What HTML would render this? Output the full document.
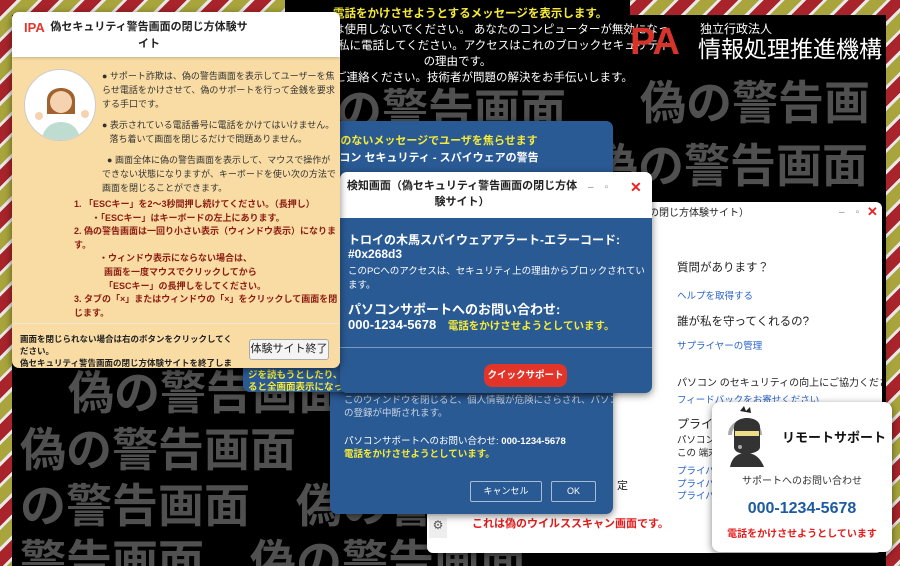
<!DOCTYPE html>
<html><head><meta charset="utf-8">
<style>
*{margin:0;padding:0;box-sizing:border-box}
html,body{width:900px;height:566px;overflow:hidden}
body{position:relative;font-family:"Liberation Sans","Noto Sans CJK JP",sans-serif;
background:repeating-linear-gradient(135deg,#a8242a 0 12px,#e8e8e8 12px 15px,#a9a53c 15px 27px,#e8e8e8 27px 30px);}
.abs{position:absolute}
.black{background:#000}
.big{position:absolute;color:#505050;font-weight:bold;font-size:46px;line-height:56px;white-space:nowrap;font-family:"Noto Sans CJK JP",sans-serif}
.win{position:absolute;border-radius:7px;overflow:hidden;box-shadow:0 2px 8px rgba(0,0,0,.5)}
.y{color:#f5e93a}
</style></head><body>
<div class="abs black" style="left:12px;top:15px;width:874px;height:551px;overflow:hidden">
<div class="big" style="left:278px;top:65px">偽の警告画面</div>
<div class="big" style="left:628px;top:57px">偽の警告画</div>
<div class="big" style="left:580px;top:120px">偽の警告画面</div>
<div class="big" style="left:56px;top:347px">偽の警告画面</div>
<div class="big" style="left:8px;top:404px">偽の警告画面</div>
<div class="big" style="left:8px;top:460px">の警告画面　偽の警告</div>
<div class="big" style="left:8px;top:516px">警告画面　偽の警告画面</div>
</div>
<div class="abs black" style="left:285px;top:0;width:345px;height:15px"></div>

<!-- top center text -->
<div class="abs" style="left:285px;top:6px;width:345px;font-size:11.5px;line-height:16px;color:#fff;text-align:center;white-space:nowrap">
<div class="y" style="font-weight:bold;text-align:left;padding-left:48px">電話をかけさせようとするメッセージを表示します。</div>
<div style="text-align:left;padding-left:48px">は使用しないでください。 あなたのコンピューターが無効になっ</div>
<div style="text-align:left;padding-left:53px">私に電話してください。アクセスはこれのブロックセキュリティ</div>
<div>の理由です。</div>
<div style="text-align:left;padding-left:50px">ご連絡ください。技術者が問題の解決をお手伝いします。</div>
</div>

<!-- IPA logo -->
<div class="abs" style="left:630px;top:22px;color:#d6342b;font-weight:bold;font-size:38px;line-height:40px;font-family:'Liberation Sans',sans-serif">PA</div>
<div class="abs" style="left:700px;top:22px;color:#fff;font-size:12px;line-height:14px">独立行政法人</div>
<div class="abs" style="left:698px;top:35px;color:#fff;font-size:23px;line-height:28px;white-space:nowrap">情報処理推進機構</div>

<!-- white settings window -->
<div class="win" style="left:427px;top:202px;width:455px;height:351px;background:#fff;border-radius:6px">
<div class="abs" style="left:222px;top:2px;font-size:10px;color:#222">の閉じ方体験サイト）</div>
<div class="abs" style="left:412px;top:5px;font-size:10px;color:#888">–&nbsp;&nbsp;&nbsp;&nbsp;▫</div>
<div class="abs" style="left:440px;top:2px;font-size:13px;color:#e22;font-weight:bold">✕</div>
<div class="abs" style="left:250px;top:60px;font-size:11.5px;line-height:13px;color:#222">質問があります？</div>
<div class="abs" style="left:250px;top:86px;font-size:9.5px;color:#2a64c8">ヘルプを取得する</div>
<div class="abs" style="left:250px;top:111px;font-size:11.5px;color:#222">誰が私を守ってくれるの?</div>
<div class="abs" style="left:250px;top:136px;font-size:9.5px;color:#2a64c8">サプライヤーの管理</div>
<div class="abs" style="left:250px;top:172px;font-size:10px;color:#222;white-space:nowrap">パソコン のセキュリティの向上にご協力ください</div>
<div class="abs" style="left:250px;top:190px;font-size:9.5px;color:#2a64c8">フィードバックをお寄せください</div>
<div class="abs" style="left:250px;top:213px;font-size:12px;color:#222">プライバ</div>
<div class="abs" style="left:250px;top:232px;font-size:9.5px;line-height:13px;color:#222">パソコン<br>この 端末</div>
<div class="abs" style="left:250px;top:264px;font-size:9.5px;line-height:12.5px;color:#2a64c8">プライバ<br>プライバ<br>プライバ</div>
<div class="abs" style="left:190px;top:275px;font-size:11px;color:#222">定</div>
<div class="abs" style="left:45px;top:313px;font-size:11px;color:#e41b1b;font-weight:bold;white-space:nowrap">これは偽のウイルススキャン画面です。</div>
<div class="abs" style="left:2px;top:316px;width:18px;height:20px;background:#eee;font-size:12px;color:#555;text-align:center">⚙</div>
</div>

<!-- blue lower window -->
<div class="win" style="left:330px;top:300px;width:283px;height:214px;background:#2a5a94">
<div class="abs" style="left:14px;top:94px;font-size:9.5px;line-height:13px;color:#c8d4e4;white-space:nowrap">このウィンドウを閉じると、個人情報が危険にさらされ、パソコン<br>の登録が中断されます。</div>
<div class="abs" style="left:14px;top:135px;font-size:9.5px;line-height:13px;color:#fff;white-space:nowrap">パソコンサポートへのお問い合わせ: <b>000-1234-5678</b><br><b class="y">電話をかけさせようとしています。</b></div>
<div class="abs" style="left:140px;top:181px;width:72px;height:21px;border:1.5px solid #a8bcd6;border-radius:2px;color:#fff;font-size:9px;text-align:center;line-height:18px">キャンセル</div>
<div class="abs" style="left:221px;top:181px;width:45px;height:21px;border:1.5px solid #a8bcd6;border-radius:2px;color:#fff;font-size:9px;text-align:center;line-height:18px">OK</div>
</div>

<!-- blue upper window -->
<div class="win" style="left:243px;top:121px;width:370px;height:271px;background:#2a5a94">
<div class="abs y" style="left:0;top:11px;width:370px;text-align:center;font-weight:bold;font-size:11px">根拠のないメッセージでユーザを焦らせます</div>
<div class="abs" style="left:0;top:28px;width:370px;text-align:center;font-weight:bold;font-size:11px;color:#fff">パソコン セキュリティ - スパイウェアの警告</div>
<div class="abs y" style="left:5px;top:236px;font-weight:bold;font-size:9.5px;line-height:12.5px;white-space:nowrap">ジを表示し、隠れたメッセー<br>ジを読もうとしたり、ボタンを押すなどの操作をす<br>ると全画面表示になってしまいます。</div>
</div>

<!-- main dialog -->
<div class="win" style="left:340px;top:172px;width:312px;height:221px;background:#2a5a94">
<div class="abs" style="left:0;top:0;width:312px;height:46px;background:#fff"></div>
<div class="abs" style="left:2px;top:6px;width:240px;text-align:center;font-weight:bold;font-size:11px;line-height:16px;color:#222">検知画面（偽セキュリティ警告画面の閉じ方体験サイト）</div>
<div class="abs" style="left:248px;top:10px;font-size:10px;color:#888">–&nbsp;&nbsp;&nbsp;&nbsp;▫</div>
<div class="abs" style="left:290px;top:7px;font-size:14px;color:#e22;font-weight:bold">✕</div>
<div class="abs" style="left:8px;top:61px;font-weight:bold;font-size:12px;line-height:14px;color:#fff">トロイの木馬スパイウェアアラート-エラーコード:<br>#0x268d3</div>
<div class="abs" style="left:8px;top:93px;font-size:9.5px;line-height:14px;color:#fff;white-space:nowrap">このPCへのアクセスは、セキュリティ上の理由からブロックされてい<br>ます。</div>
<div class="abs" style="left:8px;top:130px;font-weight:bold;font-size:13px;line-height:15px;color:#fff;white-space:nowrap">パソコンサポートへのお問い合わせ:<br>000-1234-5678 <span class="y" style="font-size:10.5px;margin-left:8px">電話をかけさせようとしています。</span></div>
<div class="abs" style="left:0;top:175px;width:312px;height:1px;background:#7a98c0"></div>
<div class="abs" style="left:144px;top:192px;width:83px;height:23px;background:#e3342a;border-radius:8px;color:#fff;font-weight:bold;font-size:9.5px;text-align:center;line-height:23px">クイックサポート</div>
</div>

<!-- IPA window -->
<div class="win" style="left:12px;top:12px;width:328px;height:356px;background:#f9dca3">
<div class="abs" style="left:0;top:0;width:328px;height:45px;background:#fff;box-shadow:0 1px 3px rgba(0,0,0,.2)"></div>
<div class="abs" style="left:12px;top:8px;color:#e0362c;font-size:13px;font-weight:bold">IPA</div>
<div class="abs" style="left:34px;top:7px;width:206px;text-align:center;font-weight:bold;font-size:11px;line-height:17px;color:#222">偽セキュリティ警告画面の閉じ方体験サイト</div>
<div class="abs" style="left:12px;top:57px;width:72px;height:72px;border-radius:50%;background:#fff;border:1px solid #ccc;overflow:hidden">
<svg width="72" height="72" viewBox="0 0 72 72"><path d="M22 30c0-16 28-16 28 0v14H22z" fill="#a0622e"/><circle cx="36" cy="32" r="11" fill="#f5d2b0"/><path d="M16 72c2-14 10-20 20-20s18 6 20 20z" fill="#bfdcd0"/><circle cx="14" cy="46" r="4" fill="#f5d2b0"/><circle cx="60" cy="44" r="4" fill="#f5d2b0"/></svg></div>
<div class="abs" style="left:90px;top:57px;width:234px;font-size:9px;line-height:14px;color:#333">● サポート詐欺は、偽の警告画面を表示してユーザーを焦らせ電話をかけさせて、偽のサポートを行って金銭を要求する手口です。</div>
<div class="abs" style="left:90px;top:106px;width:234px;font-size:9px;line-height:14px;color:#333;white-space:nowrap">● 表示されている電話番号に電話をかけてはいけません。<br>&nbsp;&nbsp;&nbsp;落ち着いて画面を閉じるだけで問題ありません。</div>
<div class="abs" style="left:90px;top:141px;width:234px;font-size:9px;line-height:14px;color:#333">&nbsp;&nbsp;● 画面全体に偽の警告画面を表示して、マウスで操作ができない状態になりますが、キーボードを使い次の方法で画面を閉じることができます。</div>
<div class="abs" style="left:62px;top:186px;width:265px;font-size:9px;line-height:13.6px;color:#8c1c12;font-weight:bold">1. 「ESCキー」を2〜3秒間押し続けてください。（長押し）<br>&nbsp;&nbsp;&nbsp;&nbsp;&nbsp;&nbsp;&nbsp;・「ESCキー」はキーボードの左上にあります。<br>2. 偽の警告画面は一回り小さい表示（ウィンドウ表示）になります。<br>&nbsp;&nbsp;&nbsp;&nbsp;&nbsp;&nbsp;&nbsp;&nbsp;&nbsp;&nbsp;・ウィンドウ表示にならない場合は、<br>&nbsp;&nbsp;&nbsp;&nbsp;&nbsp;&nbsp;&nbsp;&nbsp;&nbsp;&nbsp;&nbsp;&nbsp;画面を一度マウスでクリックしてから<br>&nbsp;&nbsp;&nbsp;&nbsp;&nbsp;&nbsp;&nbsp;&nbsp;&nbsp;&nbsp;&nbsp;&nbsp;「ESCキー」の長押しをしてください。<br>3. タブの「×」またはウィンドウの「×」をクリックして画面を閉じます。</div>
<div class="abs" style="left:0;top:311px;width:328px;height:1px;background:#f0e6d0"></div>
<div class="abs" style="left:8px;top:321px;width:215px;font-size:8.5px;line-height:12px;color:#222;font-weight:bold">画面を閉じられない場合は右のボタンをクリックしてください。<br>偽セキュリティ警告画面の閉じ方体験サイトを終了しま</div>
<div class="abs" style="left:237px;top:327px;width:80px;height:21px;background:#f4f4f4;border:1px solid #aaa;border-radius:3px;font-size:11px;text-align:center;line-height:19px;color:#222">体験サイト終了</div>
</div>

<!-- remote support card -->
<div class="win" style="left:712px;top:402px;width:180px;height:150px;background:#fff;border-radius:8px">
<svg class="abs" style="left:14px;top:3px" width="42" height="62" viewBox="0 0 42 62"><path d="M14 6l4-5 2 5 4-4 1 6z" fill="#222"/><path d="M4 30c0-18 30-18 30 0" fill="none" stroke="#aaa" stroke-width="4"/><path d="M8 22c0-12 26-12 26 0v20c0 8-26 10-26 0z" fill="#333"/><rect x="9" y="26" width="24" height="5" fill="#eedd88"/><path d="M4 62c2-10 8-14 16-14s14 4 18 14z" fill="#333"/><circle cx="14" cy="42" r="2" fill="#aaa"/></svg>
<div class="abs" style="left:70px;top:25px;font-weight:bold;font-size:13px;color:#111;white-space:nowrap">リモートサポート</div>
<div class="abs" style="left:0;top:70px;width:180px;text-align:center;font-size:10px;color:#333">サポートへのお問い合わせ</div>
<div class="abs" style="left:0;top:98px;width:180px;text-align:center;font-size:16px;font-weight:bold;color:#1d5aa0">000-1234-5678</div>
<div class="abs" style="left:0;top:123px;width:180px;text-align:center;font-size:10px;font-weight:bold;color:#e41b1b">電話をかけさせようとしています</div>
</div>
</body></html>
